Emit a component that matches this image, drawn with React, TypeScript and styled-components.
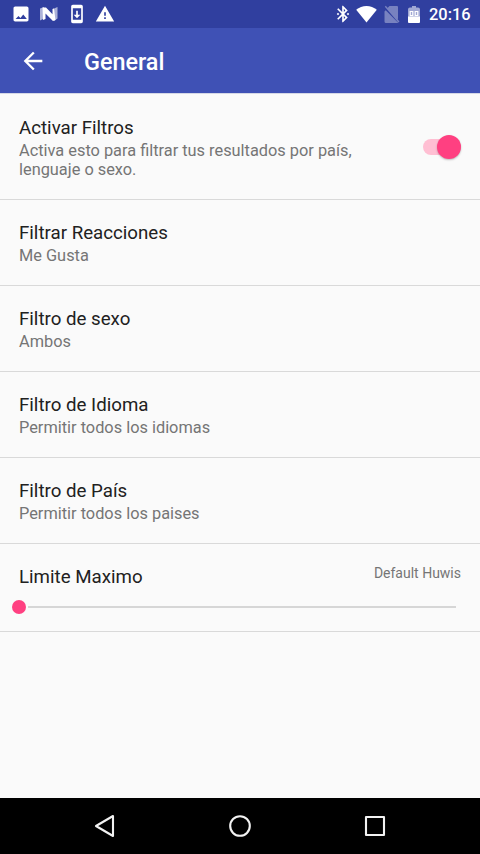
import React from "react";
import styled, { createGlobalStyle } from "styled-components";

const GlobalStyle = createGlobalStyle`
  * { box-sizing: border-box; }
  html, body { margin: 0; padding: 0; background: #fafafa; }
  body { font-family: Roboto, "Noto Sans", sans-serif; }
`;

const Screen = styled.div`
  display: flex;
  flex-direction: column;
  width: 480px;
  height: 854px;
  overflow: hidden;
  background: #fafafa;
`;

const StatusBar = styled.header`
  display: flex;
  justify-content: space-between;
  align-items: center;
  height: 28px;
  flex: none;
  padding: 0 10px 0 11px;
  background: #303f9f;
  color: #fff;
`;

const IconGroup = styled.div<{ $gap: number }>`
  display: flex;
  align-items: center;
  gap: ${(p) => p.$gap}px;
`;

const StatusIcon = styled.svg<{ $w?: number; $h?: number }>`
  display: block;
  flex: none;
  width: ${(p) => p.$w ?? 20}px;
  height: ${(p) => p.$h ?? 20}px;
  fill: #fff;
`;

const Clock = styled.span`
  width: 41px;
  margin-left: 3px;
  font-size: 16.4px;
  line-height: 20px;
  font-weight: 500;
  white-space: nowrap;
  padding-top: 1px;
`;

const Toolbar = styled.div`
  display: flex;
  align-items: center;
  flex: none;
  height: 65px;
  padding: 1px 0 0 19px;
  background: #3f51b5;
`;

const BackButton = styled.button`
  display: flex;
  width: 28px;
  height: 28px;
  padding: 0;
  border: 0;
  background: none;
  svg { width: 28px; height: 28px; fill: #fff; }
`;

const ScreenTitle = styled.h1`
  margin: 2px 0 0 37px;
  font-size: 23.4px;
  line-height: 28px;
  font-weight: 500;
  color: #fff;
`;

const Preferences = styled.main`
  flex: 1;
  min-height: 0;
  padding-top: 1px;
  border-top: 1px solid #d5d8e6;
`;

const Preference = styled.section<{ $height: number }>`
  display: flex;
  align-items: flex-start;
  justify-content: space-between;
  height: ${(p) => p.$height}px;
  padding: 22px 19px 0;
  border-bottom: 1px solid #d9d9d9;
`;

const SliderPreference = styled.section`
  height: 88px;
  padding: 22px 19px 0;
  border-bottom: 1px solid #d9d9d9;
`;

const SliderHeader = styled.div`
  display: flex;
  justify-content: space-between;
`;

const Name = styled.div`
  font-size: 18.7px;
  line-height: 23px;
  color: #212121;
  white-space: nowrap;
`;

const Summary = styled.div`
  width: 350px;
  margin-top: 1px;
  font-size: 16.35px;
  line-height: 19px;
  color: #757575;
`;

const Value = styled.span`
  font-size: 14px;
  line-height: 15px;
  color: #757575;
`;

const Switch = styled.div`
  display: flex;
  align-items: center;
  justify-content: flex-end;
  width: 38px;
  height: 16px;
  margin-top: 22px;
  border-radius: 8px;
  background: #ffbfd3;
`;

const SwitchThumb = styled.div`
  flex: none;
  width: 24px;
  height: 24px;
  border-radius: 50%;
  background: #ff4081;
  box-shadow: 0 1px 2px rgba(0, 0, 0, 0.25);
`;

const Slider = styled.div`
  display: flex;
  align-items: center;
  width: 444px;
  height: 14px;
  margin: 11px 0 0 -7px;
`;

const SliderThumb = styled.div`
  flex: none;
  width: 14px;
  height: 14px;
  border-radius: 50%;
  background: #ff4081;
`;

const SliderTrack = styled.div`
  flex: 1;
  height: 2px;
  margin-left: 2px;
  background: #d6d6d6;
`;

const NavigationBar = styled.nav`
  display: grid;
  grid-template-columns: repeat(3, 135px);
  justify-content: center;
  justify-items: center;
  align-items: center;
  flex: none;
  height: 56px;
  background: #000;
`;

const NavIcon = styled.svg`
  width: 28px;
  height: 28px;
  fill: none;
  stroke: #f2f2f2;
  stroke-width: 2.1;
  stroke-linejoin: round;
`;

const filters = [
  { name: "Filtrar Reacciones", summary: "Me Gusta" },
  { name: "Filtro de sexo", summary: "Ambos" },
  { name: "Filtro de Idioma", summary: "Permitir todos los idiomas" },
  { name: "Filtro de País", summary: "Permitir todos los paises" },
];

export default function App() {
  return (
    <>
      <GlobalStyle />
      <Screen>
        <StatusBar>
          <IconGroup $gap={8}>
            <StatusIcon viewBox="0 0 24 24">
              <path d="M21 19V5c0-1.100-.9-2-2-2H5c-1.100 0-2 .9-2 2v14c0 1.100.9 2 2 2h14c1.100 0 2-.9 2-2zM5.500 18l3.500-3.600 2.300 2.300 3.400-4.200 4.300 5.500z" fillRule="evenodd" />
            </StatusIcon>
            <StatusIcon viewBox="0 0 20 20">
              <path d="M1 4.500L5 3v11.500l-4 2zM14 5l4.500-2v11.500L15 17z" opacity=".6" />
              <path d="M3.500 3.500H7l6.500 6.800V5l1.500-.5 1.500 11.500-2.500 1L6.500 9.500V15L4 16z" />
            </StatusIcon>
            <StatusIcon viewBox="0 0 24 24">
              <path d="M17 1.010L7 1c-1.100 0-2 .9-2 2v18c0 1.100.9 2 2 2h10c1.100 0 2-.9 2-2V3c0-1.100-.9-1.990-2-1.990zM17 19H7V5h10v14zm-1-6h-3V8h-2v5H8l4 4 4-4z" />
            </StatusIcon>
            <StatusIcon viewBox="0 0 24 24">
              <path d="M1 21h22L12 2 1 21zm12-3h-2v-2h2v2zm0-4h-2v-4h2v4z" />
            </StatusIcon>
          </IconGroup>
          <IconGroup $gap={2}>
            <StatusIcon viewBox="0 0 24 24">
              <path d="M17.710 7.710L12 2h-1v7.590L6.410 5 5 6.410 10.590 12 5 17.590 6.410 19 11 14.410V22h1l5.710-5.710-4.300-4.290 4.300-4.290zM13 5.830l1.880 1.880L13 9.590V5.830zm1.880 10.460L13 18.170v-3.760l1.880 1.880zM6 10.500L7.500 12 6 13.500 4.500 12zM18 10.500l1.500 1.500-1.500 1.500-1.500-1.500z" />
            </StatusIcon>
            <StatusIcon $w={23} viewBox="0 0 22 20">
              <path d="M11 18.500L.7 5.700C3.600 3.400 7.200 2 11 2s7.400 1.400 10.300 3.700z" />
            </StatusIcon>
            <StatusIcon $w={22} viewBox="0 0 22 20">
              <path opacity=".35" d="M9.500 2H17a1 1 0 0 1 1 1v12.500L6.800 4.700zM5.700 6.200L18.400 19H6a1.500 1.500 0 0 1-1.500-1.500V7.400zM4.800 2.800l1-1L19.500 17.500l-1.200 1z" />
            </StatusIcon>
            <StatusIcon $w={20} viewBox="0 0 20 20">
              <path opacity=".55" d="M6 3.500h2V2h4v1.500h2a2 2 0 0 1 2 2V13H4V5.500a2 2 0 0 1 2-2z" />
              <path d="M4 12.500h12V18a1 1 0 0 1-1 1H5a1 1 0 0 1-1-1z" />
              <path fill="none" stroke="#fff" strokeWidth="1.200" d="M6.200 7.500h2.600v4H6.200zM11.200 7.500h2.600v4h-2.600z" />
            </StatusIcon>
            <Clock>20:16</Clock>
          </IconGroup>
        </StatusBar>
        <Toolbar>
          <BackButton aria-label="Atrás">
            <svg viewBox="0 0 24 24">
              <path d="M20 11H7.830l5.590-5.590L12 4l-8 8 8 8 1.410-1.410L7.830 13H20v-2z" />
            </svg>
          </BackButton>
          <ScreenTitle>General</ScreenTitle>
        </Toolbar>
        <Preferences>
          <Preference $height={105}>
            <div>
              <Name>Activar Filtros</Name>
              <Summary>Activa esto para filtrar tus resultados por país, lenguaje o sexo.</Summary>
            </div>
            <Switch role="switch" aria-checked="true">
              <SwitchThumb />
            </Switch>
          </Preference>
          {filters.map((f) => (
            <Preference key={f.name} $height={86}>
              <div>
                <Name>{f.name}</Name>
                <Summary>{f.summary}</Summary>
              </div>
            </Preference>
          ))}
          <SliderPreference>
            <SliderHeader>
              <Name>Limite Maximo</Name>
              <Value>Default Huwis</Value>
            </SliderHeader>
            <Slider>
              <SliderThumb />
              <SliderTrack />
            </Slider>
          </SliderPreference>
        </Preferences>
        <NavigationBar>
          <NavIcon viewBox="0 0 28 28">
            <path d="M22 4v20L5 14z" />
          </NavIcon>
          <NavIcon viewBox="0 0 28 28">
            <circle cx="14" cy="14" r="9.800" />
          </NavIcon>
          <NavIcon viewBox="0 0 28 28">
            <rect x="5" y="5" width="18" height="18" />
          </NavIcon>
        </NavigationBar>
      </Screen>
    </>
  );
}
